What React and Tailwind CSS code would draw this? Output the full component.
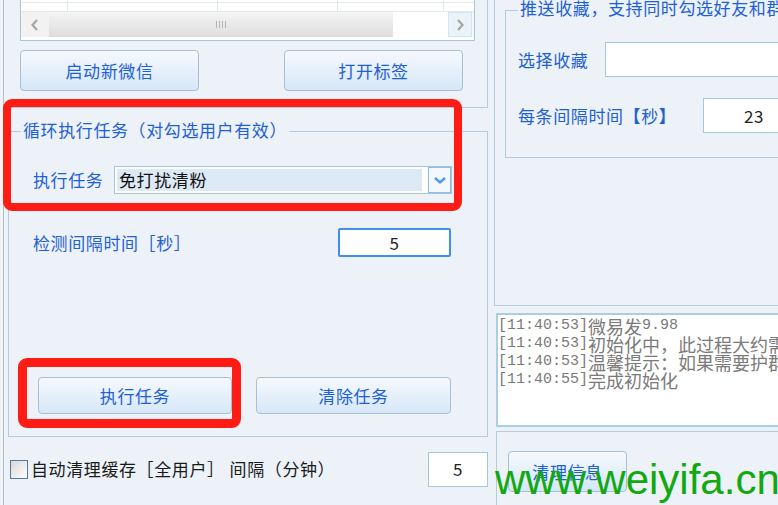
import React from "react";

const Btn = ({ children, className = "" }) => (
  <div
    className={`flex items-center justify-center rounded-[4px] border border-[#a9bfd2] bg-linear-to-b from-[#f6f9fd] to-[#d6e7f8] text-[17px] tracking-[0.6px] text-[#1f5fd6] ${className}`}
  >
    {children}
  </div>
);

const Chevron = ({ dir = "left" }) => (
  <svg width="10" height="14" viewBox="0 0 10 14" className="text-[#a6a6a6]">
    <path
      d={dir === "left" ? "M7 2 L2.5 7 L7 12" : "M3 2 L7.5 7 L3 12"}
      fill="none"
      stroke="currentColor"
      strokeWidth="2.2"
    />
  </svg>
);

const logLines = [
  ["[11:40:53]", "微易发", "9.98"],
  ["[11:40:53]", "初始化中，此过程大约需要几秒钟，请稍候", ""],
  ["[11:40:53]", "温馨提示：如果需要护群功能，请先设置", ""],
  ["[11:40:55]", "完成初始化", ""],
];

export default function App() {
  return (
    <div className="relative flex h-[505px] w-[778px] overflow-hidden bg-[#ecf2f7] font-['Noto_Sans_CJK_SC',sans-serif] tracking-[0.6px]">
      {/* left strip from other window */}
      <div className="h-full w-[4px] shrink-0 border-r border-[#a8c0d0] bg-[#f3f3f3]" />

      {/* left column */}
      <div className="flex w-[486px] shrink-0 flex-col">
        {/* top section with table and buttons */}
        <div className="h-[108px] w-[484px] border-r border-b border-[#b2ccd9]">
          <div className="ml-[16px] h-[41px] w-[455px] border-x border-b border-[#a6c8d6] bg-white">
            {/* grid rows */}
            <div className="relative h-[12px] border-b border-[#e4e9ec]">
              <div className="h-[3px] border-b border-[#e4e9ec]" />
              <div className="absolute top-0 left-[46px] h-full border-l border-[#e4e9ec]" />
              <div className="absolute top-0 left-[196px] h-full border-l border-[#e4e9ec]" />
              <div className="absolute top-0 left-[316px] h-full border-l border-[#e4e9ec]" />
              <div className="absolute top-0 left-[422px] h-full border-l border-[#e4e9ec]" />
            </div>
            {/* scrollbar */}
            <div className="flex h-[25px] bg-[#f7f7f7]">
              <div className="flex w-[28px] items-center justify-center bg-[#f2f2f2]">
                <Chevron dir="left" />
              </div>
              <div className="flex w-[344px] items-center justify-center bg-linear-to-b from-[#f4f4f4] to-[#dedede]">
                <div className="flex gap-[2px]">
                  <div className="h-[7px] w-px bg-[#b5b5b5]" />
                  <div className="h-[7px] w-px bg-[#b5b5b5]" />
                  <div className="h-[7px] w-px bg-[#b5b5b5]" />
                  <div className="h-[7px] w-px bg-[#b5b5b5]" />
                </div>
              </div>
              <div className="w-[55px] bg-white" />
              <div className="flex w-[24px] items-center justify-center border border-[#d3e6f0] bg-[#eaf3f8]">
                <Chevron dir="right" />
              </div>
            </div>
          </div>
          <div className="mt-[9px] ml-[16px] flex gap-[85px]">
            <Btn className="h-[41px] w-[179px]">启动新微信</Btn>
            <Btn className="h-[41px] w-[179px]">打开标签</Btn>
          </div>
        </div>

        {/* 循环执行任务 group */}
        <div className="mt-[23px] ml-[4px] h-[306px] w-[480px] border border-[#b2ccd9]">
          <div className="-mt-[13px] ml-[12px] w-fit bg-[#ecf2f7] px-[2px] text-[17px] leading-[22px] text-[#1f5fd6]">
            循环执行任务（对勾选用户有效）
          </div>
          <div className="mt-[25px] flex items-center">
            <div className="ml-[24px] w-[81px] text-[17px] text-[#1f5fd6]">执行任务</div>
            <div className="flex h-[28px] w-[338px] items-center border border-[#a6c6d6] bg-white p-[2px]">
              <div className="flex h-full w-[305px] items-center bg-[#dde9f5] pl-[2px] text-[17px] text-[#111]">
                免打扰清粉
              </div>
              <div className="-mr-[2px] ml-auto flex h-[26px] w-[23px] items-center justify-center border border-[#8cbcef] bg-[#f3f8fd]">
                <svg width="14" height="9" viewBox="0 0 14 9">
                  <path d="M2 2 L7 6.5 L12 2" fill="none" stroke="#4f97e6" strokeWidth="2.4" />
                </svg>
              </div>
            </div>
          </div>
          <div className="mt-[34px] flex items-center">
            <div className="ml-[24px] w-[305px] text-[17px] text-[#1f5fd6]">检测间隔时间［秒］</div>
            <div className="flex h-[29px] w-[113px] items-center justify-center rounded-[2px] border-2 border-[#3d8ff0] bg-white text-[17px] text-[#222]">
              5
            </div>
          </div>
          <div className="mt-[120px] ml-[29px] flex gap-[24px]">
            <Btn className="h-[37px] w-[194px]">执行任务</Btn>
            <Btn className="h-[37px] w-[195px]">清除任务</Btn>
          </div>
        </div>

        {/* bottom row */}
        <div className="flex flex-1 items-center pb-[4px]">
          <div className="ml-[6px] h-[19px] w-[18px] border border-[#55779a] bg-linear-to-br from-[#d8d8d8] to-[#ffffff]" />
          <div className="ml-[3px] text-[17px] text-[#1a1a1a]">自动清理缓存［全用户］</div>
          <div className="ml-[5px] text-[17px] text-[#1a1a1a]">间隔（分钟）</div>
          <div className="mr-[2px] ml-auto flex h-[35px] w-[60px] items-center justify-center border border-[#a6c8d6] bg-white text-[17px] text-[#222]">
            5
          </div>
        </div>
      </div>

      {/* right column */}
      <div className="flex min-w-0 flex-1 flex-col">
        <div className="ml-[4px] h-[306px] border-b border-l border-[#b2ccd9] pt-[10px]">
          <div className="ml-[10px] h-[148px] border-t border-b border-l border-[#b2ccd9]">
            <div className="-mt-[14px] ml-[12px] w-fit whitespace-nowrap bg-[#ecf2f7] px-[2px] text-[17px] leading-[22px] text-[#1f5fd6]">
              推送收藏，支持同时勾选好友和群发送
            </div>
            <div className="mt-[23px] flex items-center">
              <div className="ml-[12px] w-[87px] shrink-0 text-[17px] text-[#1f5fd6]">选择收藏</div>
              <div className="h-[35px] w-[200px] shrink-0 border border-[#a6c8d6] bg-white" />
            </div>
            <div className="mt-[21px] flex items-center">
              <div className="ml-[12px] w-[185px] shrink-0 whitespace-nowrap text-[17px] text-[#1f5fd6]">
                每条间隔时间<span className="font-bold">【</span>秒<span className="font-bold">】</span>
              </div>
              <div className="flex h-[35px] w-[102px] shrink-0 items-center justify-center border border-[#a6c8d6] bg-white text-[17px] text-[#222]">
                23
              </div>
            </div>
          </div>
        </div>

        {/* log box */}
        <div className="mt-[7px] ml-[6px] h-[114px] overflow-hidden border-2 border-r-0 border-[#a8d0e2] bg-white pt-[2px] leading-[18px] tracking-normal text-[#7a7a7a]">
          {logLines.map(([t, msg, ver], i) => (
            <div key={i} className="flex h-[18px] items-end whitespace-nowrap">
              <span className="font-['Liberation_Mono',monospace] text-[15px]">{t}</span>
              <span className="text-[18px]">{msg}</span>
              {ver && <span className="font-['Liberation_Mono',monospace] text-[15px]">{ver}</span>}
            </div>
          ))}
        </div>

        {/* bottom panel */}
        <div className="mt-[4px] ml-[6px] flex-1 border-t border-l border-[#b2ccd9] pt-[19px] pl-[11px]">
          <Btn className="h-[41px] w-[119px]">清理信息</Btn>
        </div>
      </div>

      {/* annotation rectangles */}
      <div className="pointer-events-none absolute top-[99px] left-[3px] h-[112px] w-[459px] rounded-[9px] border-[8px] border-[#fe1c14]" />
      <div className="pointer-events-none absolute top-[358px] left-[18px] h-[70px] w-[223px] rounded-[9px] border-[9px] border-[#fe1c14]" />

      {/* watermark */}
      <div className="pointer-events-none absolute top-[459px] left-[495px] whitespace-nowrap font-['Liberation_Sans',Arial,sans-serif] text-[42px] leading-[42px] tracking-normal text-[#12a812]">
        www.weiyifa.cn
      </div>
    </div>
  );
}
